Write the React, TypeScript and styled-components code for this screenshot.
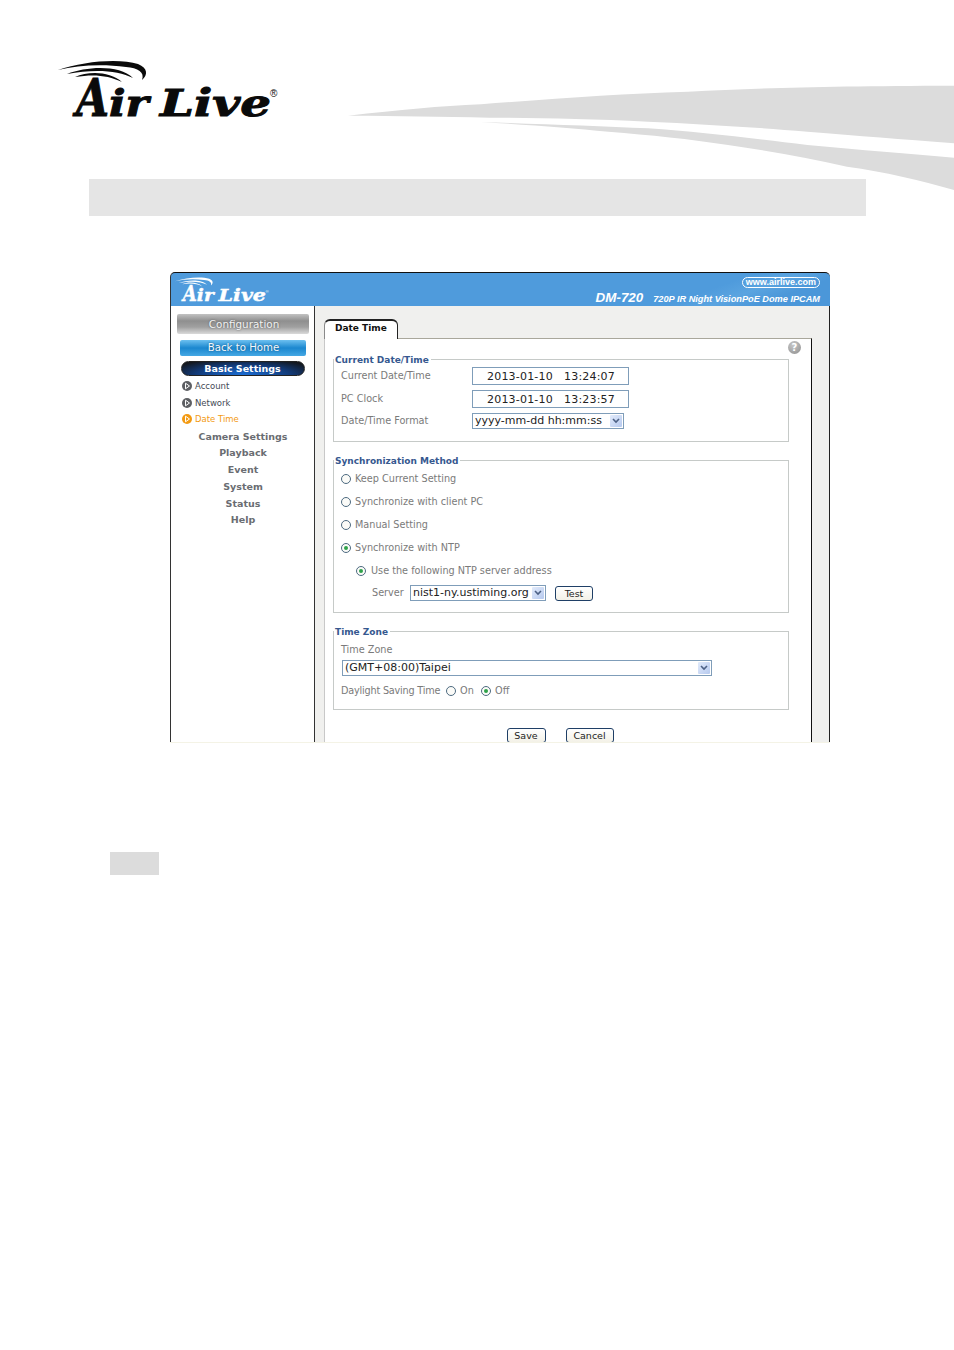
import { createGlobalStyle } from "styled-components";
import styled from "styled-components";

const GlobalStyle = createGlobalStyle`
  html, body {
    margin: 0;
    padding: 0;
    background: #fff;
  }
  * {
    box-sizing: border-box;
  }
`;

const Page = styled.div`
  width: 954px;
  height: 1350px;
  overflow: hidden;
  font-family: "DejaVu Sans", Verdana, sans-serif;
`;

const Header = styled.div`
  height: 179px;
  padding: 60px 0 0 58px;
  display: flex;
  align-items: flex-start;
  justify-content: space-between;
`;

const BrandLogo = styled.svg`
  display: block;
  flex: none;
  overflow: visible;
`;

const Swoosh = styled.svg`
  display: block;
  flex: none;
  margin-top: 25px;
  overflow: visible;
`;

const TitleBar = styled.div`
  width: 777px;
  height: 37px;
  margin-left: 89px;
  background: #e5e5e5;
`;

const Window = styled.div`
  width: 660px;
  height: 471px;
  margin: 56px 0 0 170px;
  display: flex;
  flex-direction: column;
  overflow: hidden;
  border-bottom: 1px solid #f4f3e6;
`;

const TopBar = styled.div`
  height: 34px;
  flex: none;
  display: flex;
  justify-content: space-between;
  padding: 4px 10px 0 4px;
  color: #fff;
  background: linear-gradient(160deg, #4f9bdc 78%, #5ba4e0 84%, #4b97d9 90%);
  border-top: 1px solid #111;
  border-left: 1px solid #333;
  border-radius: 5px 5px 0 0;
`;

const BarInfo = styled.div`
  display: flex;
  flex-direction: column;
  align-items: flex-end;
`;

const SiteBadge = styled.div`
  height: 11px;
  padding: 0 3px;
  border: 1.5px solid #fff;
  border-radius: 6px;
  font: bold 9px/8px "Liberation Sans", Arial, sans-serif;
`;

const ModelLine = styled.div`
  display: flex;
  align-items: baseline;
  gap: 10px;
  margin-top: 3px;
  font: italic bold 9.2px/14px "Liberation Sans", Arial, sans-serif;
  white-space: nowrap;
`;

const ModelName = styled.span`
  font-size: 13.4px;
`;

const Body = styled.div`
  flex: 1;
  min-height: 0;
  display: flex;
  border-left: 1px solid #333;
  border-right: 1px solid #222;
`;

const Sidebar = styled.div`
  width: 144px;
  flex: none;
  display: flex;
  flex-direction: column;
  align-items: center;
  padding-top: 8px;
  background: #fff;
  border-right: 1px solid #333;
`;

const ConfigHead = styled.div`
  width: 132px;
  height: 20px;
  padding-left: 3px;
  color: #f2f2f2;
  text-align: center;
  font: 10.4px/21px "DejaVu Sans", Verdana, sans-serif;
  text-shadow: 0 0 2px #555;
  background: linear-gradient(#c2c2c2, #8f8f8f 35%, #a0a0a0 65%, #dadada);
  border-radius: 2px;
`;

const HomeButton = styled.div`
  width: 126px;
  height: 16px;
  margin-top: 6px;
  padding-left: 2px;
  color: #f4f8fc;
  text-align: center;
  font: 10.2px/16px "DejaVu Sans", Verdana, sans-serif;
  text-shadow: 0 0 2px #14557f;
  background: linear-gradient(#6cc0f0, #1b87cf 50%, #45a8e4);
  border-radius: 2px;
`;

const SectionPill = styled.div`
  width: 124px;
  height: 15px;
  margin-top: 5px;
  color: #fff;
  text-align: center;
  font: bold 9.5px/14px "DejaVu Sans", Verdana, sans-serif;
  background: radial-gradient(ellipse at 50% 100%, #1b6fd8 0%, #123a78 55%, #14181f 90%);
  border: 1px solid #222;
  border-radius: 8px;
`;

const SubList = styled.div`
  align-self: stretch;
  display: flex;
  flex-direction: column;
  margin-top: 2px;
  padding-left: 11px;
`;

const SubItem = styled.div<{ $active?: boolean }>`
  height: 16.5px;
  display: flex;
  align-items: center;
  gap: 3px;
  color: ${(p) => (p.$active ? "#f39a12" : "#444a55")};
  font: 8.5px/16px "DejaVu Sans", Verdana, sans-serif;
`;

const MenuItem = styled.div`
  height: 16.8px;
  padding-left: 1px;
  color: #6a6d72;
  text-align: center;
  font: bold 9.5px/17px "DejaVu Sans", Verdana, sans-serif;
`;

const Content = styled.div`
  flex: 1;
  min-width: 0;
  padding: 13px 17px 0 9px;
  background: #f0f0ee;
`;

const Tab = styled.div`
  width: 74px;
  height: 20px;
  margin-bottom: -1px;
  position: relative;
  padding-left: 10px;
  background: #fff;
  color: #111;
  font: bold 9px/15px "DejaVu Sans", Verdana, sans-serif;
  border-top: 2px solid #222;
  border-left: 1px solid #8a8a8a;
  border-right: 1px solid #222;
  border-radius: 6px 6px 0 0;
`;

const Panel = styled.div`
  height: 420px;
  padding: 0 0 0 8px;
  background: #fff;
  border-top: 1px solid #a9a79b;
  border-left: 1px solid #c8c8c8;
  border-right: 1px solid #111;
`;

const HelpRow = styled.div`
  height: 14px;
  padding: 2px 10px 0 0;
  display: flex;
  justify-content: flex-end;
`;

const HelpIcon = styled.div`
  width: 13px;
  height: 13px;
  flex: none;
  border-radius: 50%;
  color: #fff;
  text-align: center;
  font: bold 10px/13px "DejaVu Sans", Verdana, sans-serif;
  background: radial-gradient(circle at 40% 30%, #c8c8c8, #8d8d8d);
`;

const Group = styled.fieldset<{ $height: number; $gap?: number; $top?: number }>`
  width: 456px;
  height: ${(p) => p.$height}px;
  margin: 0 0 ${(p) => p.$gap ?? 0}px;
  padding: ${(p) => p.$top ?? 0}px 0 0 7px;
  min-width: 0;
  border: 1px solid #c6cac8;
`;

const GroupTitle = styled.legend`
  margin-left: -7px;
  padding: 0 2px 0 1px;
  position: relative;
  top: 1px;
  color: #36588f;
  font: bold 9px/12px "DejaVu Sans", Verdana, sans-serif;
`;

const Row = styled.div<{ $indent?: number; $height?: number }>`
  height: ${(p) => p.$height ?? 22.8}px;
  display: flex;
  align-items: center;
  padding-left: ${(p) => p.$indent ?? 0}px;
  color: #7a7a7a;
  font: 9.7px/14px "DejaVu Sans", Verdana, sans-serif;
  white-space: nowrap;
`;

const FieldLabel = styled.span<{ $width?: number; $tight?: boolean }>`
  width: ${(p) => (p.$width ? `${p.$width}px` : "auto")};
  flex: none;
  letter-spacing: ${(p) => (p.$tight ? "-0.2px" : "normal")};
`;

const ValueBox = styled.div`
  width: 157px;
  height: 18px;
  padding-left: 14px;
  white-space: pre;
  color: #222;
  font: 11px/17px "DejaVu Sans", Verdana, sans-serif;
  letter-spacing: 0.2px;
  border: 1px solid #7f9db9;
`;

const Select = styled.div<{ $width: number; $offset?: number }>`
  width: ${(p) => p.$width}px;
  height: 16px;
  margin-left: ${(p) => p.$offset ?? 0}px;
  display: flex;
  align-items: center;
  justify-content: space-between;
  padding: 0 1px 0 2px;
  color: #222;
  font: 11px/14px "DejaVu Sans", Verdana, sans-serif;
  border: 1px solid #7f9db9;
`;

const SelectArrow = styled.span`
  width: 12px;
  height: 12px;
  flex: none;
  display: flex;
  align-items: center;
  justify-content: center;
  background: linear-gradient(135deg, #e2ebfb, #b6c9ee);
  border-radius: 1px;
`;

const RadioDot = styled.span<{ $on?: boolean; $right?: number }>`
  width: 10px;
  height: 10px;
  flex: none;
  margin-right: ${(p) => p.$right ?? 4}px;
  display: flex;
  align-items: center;
  justify-content: center;
  background: #fbfbf8;
  border: 1px solid #4d6a80;
  border-radius: 50%;
  &::after {
    content: "";
    display: ${(p) => (p.$on ? "block" : "none")};
    width: 4px;
    height: 4px;
    border-radius: 50%;
    background: #2fa24a;
  }
`;

const SmallButton = styled.div<{ $width: number; $offset?: number }>`
  width: ${(p) => p.$width}px;
  height: 15px;
  margin-left: ${(p) => p.$offset ?? 0}px;
  text-align: center;
  color: #222;
  font: 9.5px/14px "DejaVu Sans", Verdana, sans-serif;
  background: linear-gradient(#fff, #f3f1e7);
  border: 1px solid #1f3f66;
  border-radius: 3px;
`;

const ActionBar = styled.div`
  display: flex;
  justify-content: center;
  gap: 20px;
  padding: 18px 0 0 0;
  width: 454px;
`;

const NoteBox = styled.div`
  width: 49px;
  height: 23px;
  margin: 109px 0 0 110px;
  background: #dcdcdc;
`;

function Logo({ width, color }: { width: number; color: string }) {
  const face = { fontFamily: "'DejaVu Serif', serif", fontWeight: 700, fontStyle: "italic" as const };
  return (
    <BrandLogo width={width} height={(width * 60) / 220} viewBox="0 0 220 60">
      <g fill={color}>
        <path d="M0 10C25 1 62-2 80 4C90 8 90 15 84 20C87 12 80 8 68 7C45 4 20 5 0 10Z" />
        <path d="M9 14C30 6 62 5 75 18C60 10 35 9 9 14Z" />
        <path d="M17 17C30 11 52 11 64 22C50 15 35 14 17 17Z" />
        <text transform="translate(18 56) scale(0.82 1)" fontSize="52" stroke={color} strokeWidth="1" {...face}>
          A
        </text>
        <text transform="translate(51 56) scale(1.15 1)" fontSize="38" stroke={color} strokeWidth="1" {...face}>
          ir
        </text>
        <text transform="translate(102 56) scale(1.27 1)" fontSize="38" stroke={color} strokeWidth="1" {...face}>
          Live
        </text>
        <text x="212" y="37" fontSize="10" fontFamily="'Liberation Sans', sans-serif">
          ®
        </text>
      </g>
    </BrandLogo>
  );
}

function BulletIcon({ color }: { color: string }) {
  return (
    <svg width="10" height="10" viewBox="0 0 10 10">
      <circle cx="5" cy="5" r="5" fill={color} />
      <path d="M3.5 2.2L7.5 5L3.5 7.8Z" fill="none" stroke="#fff" strokeWidth="1" />
    </svg>
  );
}

function Chevron() {
  return (
    <svg width="8" height="6" viewBox="0 0 8 6">
      <path d="M1 1L4 4L7 1" fill="none" stroke="#4d6185" strokeWidth="1.6" />
    </svg>
  );
}

export default function App() {
  return (
    <Page>
      <GlobalStyle />
      <Header>
        <Logo width={220} color="#0a0a0a" />
        <Swoosh width="604" height="105" viewBox="350 85 604 105">
          <path
            d="M348 115.7C400 110 440 106 481 104.3C560 98 620 94 688 91.7C760 88 830 86 954 85.7V143.3C900 139 860 136 807.5 131.7C750 127 700 124 648 121.7C590 119 540 118 489 117.7C440 116.5 400 116 348 115.7Z"
            fill="#dcdcdc"
          />
          <path
            d="M481 122C540 124 600 126 648 128.3C700 132 750 138 807.5 145C860 150 910 154 954 157.7V190C920 180 885 172 847 166.7C810 158 770 151 728 145C690 139 650 135 608.5 131.7C570 128 530 125 481 122Z"
            fill="#dcdcdc"
          />
        </Swoosh>
      </Header>
      <TitleBar />
      <Window>
        <TopBar>
          <Logo width={94} color="#fff" />
          <BarInfo>
            <SiteBadge>www.airlive.com</SiteBadge>
            <ModelLine>
              <ModelName>DM-720</ModelName>
              720P IR Night VisionPoE Dome IPCAM
            </ModelLine>
          </BarInfo>
        </TopBar>
        <Body>
          <Sidebar>
            <ConfigHead>Configuration</ConfigHead>
            <HomeButton>Back to Home</HomeButton>
            <SectionPill>Basic Settings</SectionPill>
            <SubList>
              <SubItem>
                <BulletIcon color="#5d5f63" />
                Account
              </SubItem>
              <SubItem>
                <BulletIcon color="#5d5f63" />
                Network
              </SubItem>
              <SubItem $active>
                <BulletIcon color="#f39a12" />
                Date Time
              </SubItem>
            </SubList>
            <MenuItem>Camera Settings</MenuItem>
            <MenuItem>Playback</MenuItem>
            <MenuItem>Event</MenuItem>
            <MenuItem>System</MenuItem>
            <MenuItem>Status</MenuItem>
            <MenuItem>Help</MenuItem>
          </Sidebar>
          <Content>
            <Tab>Date Time</Tab>
            <Panel>
              <HelpRow>
                <HelpIcon>?</HelpIcon>
              </HelpRow>
              <Group $height={89} $gap={12}>
                <GroupTitle>Current Date/Time</GroupTitle>
                <Row $height={22.5}>
                  <FieldLabel $width={131}>Current Date/Time</FieldLabel>
                  <ValueBox>2013-01-10   13:24:07</ValueBox>
                </Row>
                <Row $height={22.5}>
                  <FieldLabel $width={131}>PC Clock</FieldLabel>
                  <ValueBox>2013-01-10   13:23:57</ValueBox>
                </Row>
                <Row $height={22.5}>
                  <FieldLabel $width={131}>Date/Time Format</FieldLabel>
                  <Select $width={152}>
                    yyyy-mm-dd hh:mm:ss
                    <SelectArrow>
                      <Chevron />
                    </SelectArrow>
                  </Select>
                </Row>
              </Group>
              <Group $height={159} $gap={12} $top={2}>
                <GroupTitle>Synchronization Method</GroupTitle>
                <Row>
                  <RadioDot />
                  Keep Current Setting
                </Row>
                <Row>
                  <RadioDot />
                  Synchronize with client PC
                </Row>
                <Row>
                  <RadioDot />
                  Manual Setting
                </Row>
                <Row>
                  <RadioDot $on />
                  Synchronize with NTP
                </Row>
                <Row $indent={15}>
                  <RadioDot $on $right={5} />
                  Use the following NTP server address
                </Row>
                <Row $indent={31}>
                  <FieldLabel $width={38}>Server</FieldLabel>
                  <Select $width={136}>
                    nist1-ny.ustiming.org
                    <SelectArrow>
                      <Chevron />
                    </SelectArrow>
                  </Select>
                  <SmallButton $width={38} $offset={9}>
                    Test
                  </SmallButton>
                </Row>
              </Group>
              <Group $height={85} $top={5}>
                <GroupTitle>Time Zone</GroupTitle>
                <Row $height={15}>Time Zone</Row>
                <Row $height={21}>
                  <Select $width={370} $offset={1}>
                    (GMT+08:00)Taipei
                    <SelectArrow>
                      <Chevron />
                    </SelectArrow>
                  </Select>
                </Row>
                <Row $height={25}>
                  <FieldLabel $width={105} $tight>
                    Daylight Saving Time
                  </FieldLabel>
                  <RadioDot />
                  <FieldLabel $width={21}>On</FieldLabel>
                  <RadioDot $on />
                  Off
                </Row>
              </Group>
              <ActionBar>
                <SmallButton $width={39}>Save</SmallButton>
                <SmallButton $width={48}>Cancel</SmallButton>
              </ActionBar>
            </Panel>
          </Content>
        </Body>
      </Window>
      <NoteBox />
    </Page>
  );
}
